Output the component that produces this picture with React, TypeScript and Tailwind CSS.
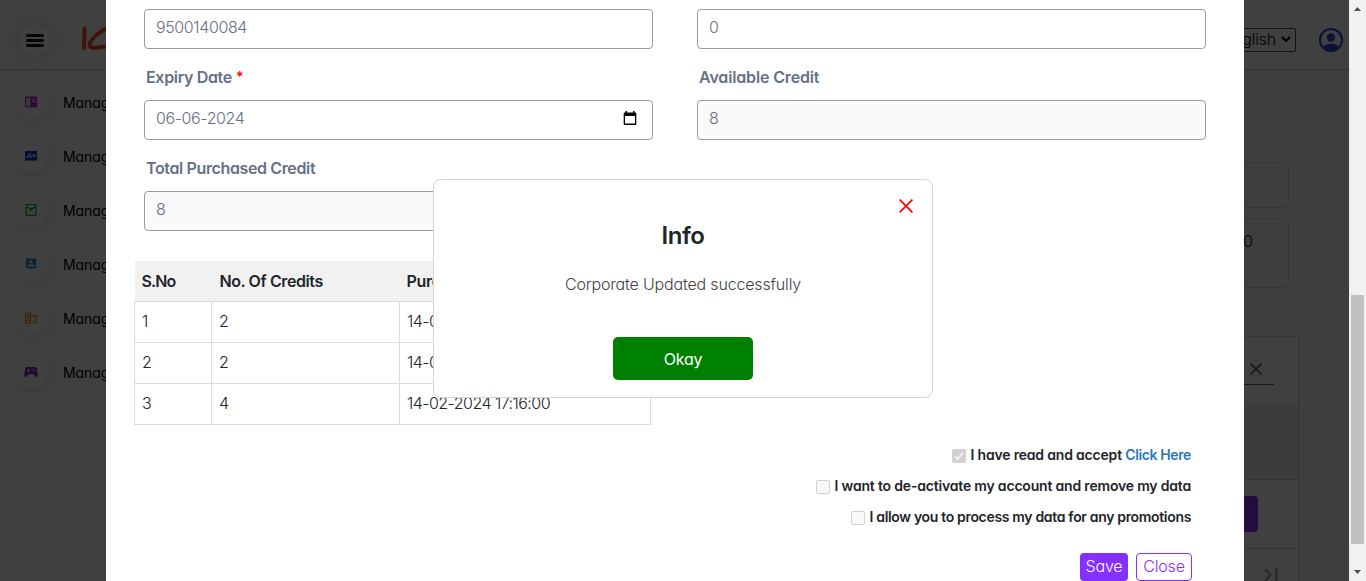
import type { ReactNode } from "react";
import { MdLastPage } from "react-icons/md";

const menuIcons: ReactNode[] = [
  <svg key="book" width="12" height="12" viewBox="0 0 12 12">
    <rect width="12" height="11" y="0.5" rx="1" fill="#b02fd0" />
    <path d="M1.3 1.8h4v8.4h-4z" fill="#fff" fillOpacity="0.85" />
    <path d="M7 3.2h3.6M7 5.4h3.6" stroke="#fff" strokeWidth="1" />
  </svg>,
  <svg key="grade" width="12" height="12" viewBox="0 0 12 12">
    <path d="M0 1h12v10l-1-.8-1 .8-1-.8-1 .8-1-.8-1 .8-1-.8-1 .8-1-.8-1 .8-1-.8-1 .8z" fill="#1d2fd0" />
    <path d="M2 8 4.200 3.300h.6L7 8M3 6.600h3M7.200 5.600h3.800M9.100 3.700v3.800" stroke="#fff" strokeWidth="1" fill="none" />
  </svg>,
  <svg key="box" width="12" height="12" viewBox="0 0 12 12" fill="none" stroke="#0fb83c" strokeWidth="1.3">
    <path d="M1.200.7h9.600v10.600H1.200zM1.200 3.600h2.200L6 5.400l2.600-1.800h2.200" />
    <circle cx="6" cy="5.400" r="0.900" fill="#0fb83c" />
  </svg>,
  <svg key="person" width="12" height="12" viewBox="0 0 12 12">
    <path d="M1.500.5h9a.7.7 0 0 1 .7.7v8.300a.7.7 0 0 1-.7.7H7.400L6 11.600l-1.400-1.400H1.500a.7.7 0 0 1-.7-.7V1.200a.7.7 0 0 1 .7-.7z" fill="#3b8fd0" />
    <circle cx="6" cy="3.800" r="1.500" fill="#fff" />
    <path d="M2.800 8.400c0-2.900 6.400-2.900 6.400 0z" fill="#fff" />
  </svg>,
  <svg key="office" width="12" height="12" viewBox="0 0 12 12" fill="none" stroke="#e2981c" strokeWidth="1.1">
    <path d="M.6 1.200h5v9.800h-5zM5.600 3.600h5.800V11H5.600zM.6 3.600h5M.6 6h5M.6 8.400h5M8.700 5.500v1.200M8.700 8v1.200" />
  </svg>,
  <svg key="game" width="14" height="12" viewBox="0 0 14 12">
    <path d="M3 1h8c1 0 1.600.6 1.800 1.500L13.800 9c.2 1.300-.6 2-1.400 2-.7 0-1-.4-1.500-1L9.500 8.300h-5L3.100 10c-.5.600-.8 1-1.500 1C.8 11 0 10.300.200 9l1-6.500C1.400 1.600 2 1 3 1z" fill="#7a30c9" />
    <path d="M3 4.600h3M4.500 3.100v3" stroke="#fff" strokeWidth="0.9" />
    <circle cx="8.600" cy="4.600" r="0.600" fill="#fff" />
    <circle cx="10.800" cy="4.600" r="0.600" fill="#fff" />
    <circle cx="9.700" cy="3.400" r="0.600" fill="#fff" />
  </svg>,
];

const purchases = [
  ["1", "2", "14-02-2024 17:10:00"],
  ["2", "2", "14-02-2024 17:12:00"],
  ["3", "4", "14-02-2024 17:16:00"],
];

function Field({ label, required, value, disabled, date, tracking = "" }: { label?: string; required?: boolean; value: string; disabled?: boolean; date?: boolean; tracking?: string }) {
  return (
    <div>
      {label && (
        <div className={`flex h-[51px] items-center pt-[5px] pl-[2px] font-semibold text-[#667085] ${tracking}`}>
          <span>{label}</span>
          {required && <span className="ml-1 text-[14px] text-[#ff0000]">*</span>}
        </div>
      )}
      <div className={`flex h-10 items-center justify-between rounded-[4px] border border-[#9a9a9f] pb-[5px] pl-[11px] pr-[15px] font-light tracking-[-0.380px] text-[#667085] ${disabled ? "bg-[#fafafa]" : "bg-white"}`}>
        <span>{value}</span>
        {date && (
          <svg width="14" height="14" viewBox="0 0 14 14" className="mt-[1px]">
            <path d="M1.500 1.500h11a.8.8 0 0 1 .8.8v10.900a.8.8 0 0 1-.8.8h-11a.8.8 0 0 1-.8-.8V2.300a.8.8 0 0 1 .8-.8zM2 5v7.600h10V5z" fill="#000" fillRule="evenodd" />
            <path d="M2.500 0H4v2H2.500zM10 0h1.500v2H10z" fill="#000" />
          </svg>
        )}
      </div>
    </div>
  );
}

function Consent({ checked, tracking, children }: { checked?: boolean; tracking: string; children: ReactNode }) {
  return (
    <label className="flex h-[31px] items-center gap-[5px]">
      <span className={`mt-px flex size-[14px] items-center justify-center rounded-[2px] ${checked ? "bg-[#d1d1d1]" : "border border-[#d1d1d1] bg-[#f9f9f9]"}`}>
        {checked && (
          <svg width="12" height="12" viewBox="0 0 12 12" fill="none" stroke="#f5f5f5" strokeWidth="1.900">
            <path d="m2 6.300 2.600 2.700L10 2.600" />
          </svg>
        )}
      </span>
      <span className={tracking}>{children}</span>
    </label>
  );
}

function Page() {
  return (
    <div className="flex h-full w-full flex-col bg-white">
      <header className="flex h-[70px] shrink-0 items-center border-b border-[#c4c4c4] pb-px pt-3">
        <div className="ml-5 flex size-[30px] items-center justify-center rounded-full bg-white shadow-[0_0_18px_6px_rgba(0,0,0,0.09)]">
          <div className="flex w-[18px] flex-col gap-[2px]">
            <i className="h-[3px] rounded-full bg-[#111]" />
            <i className="h-[3px] rounded-full bg-[#111]" />
            <i className="h-[3px] rounded-full bg-[#111]" />
          </div>
        </div>
        <svg width="50" height="26" viewBox="0 0 50 26" className="-mt-[5px] ml-[31px]" fill="none" stroke="#f4501c" strokeLinecap="round" strokeLinejoin="round">
          <path d="M3.500 3.500 3 23" strokeWidth="4" />
          <path d="M30 1C20 5 10 14 8.500 19c-1 4.500 5 4 9 3.500L30 21" strokeWidth="3.800" />
        </svg>
        <div className="-mt-[1px] ml-auto flex h-6 w-[78px] items-center justify-end rounded-[2px] border border-[#555] pb-px pr-1 font-light text-black">
          <span className="tracking-[-0.200px]">English</span>
          <svg width="10" height="7" viewBox="0 0 10 7" className="ml-[5px]" fill="none" stroke="#000" strokeWidth="2.200">
            <path d="m1 1 4 4 4-4" />
          </svg>
        </div>
        <svg width="24" height="24" viewBox="0 0 24 24" className="ml-[23px] mr-[6px]">
          <circle cx="12" cy="12" r="11" fill="none" stroke="#2840dd" strokeWidth="2" />
          <circle cx="12" cy="9.500" r="4.200" fill="#2840dd" />
          <path d="M4 18.500c3.500-3.800 12.500-3.800 16 0a11 11 0 0 1-16 0z" fill="#2840dd" />
        </svg>
      </header>
      <div className="flex min-h-0 flex-1">
        <nav className="w-[230px] shrink-0 pt-[5px]">
          {menuIcons.map((icon, i) => (
            <div key={i} className="flex h-[54px] items-center pl-[14px]">
              <span className="flex size-[34px] items-center justify-center rounded-full bg-white shadow-[3px_3px_12px_1px_rgba(0,0,0,0.09)]">{icon}</span>
              <span className="ml-[15px] pt-px text-[14px] font-normal tracking-[-0.050px] text-black">Manage</span>
            </div>
          ))}
        </nav>
        <main className="flex flex-1 flex-col bg-[#f4f8f5] pl-10 pr-[50px] pt-[92px]">
          <div className="mr-[10px] h-[46px] shrink-0 rounded-[6px] border border-[#d0d4d2]" />
          <div className="mr-[10px] mt-[10px] h-[70px] shrink-0 rounded-[6px] border border-[#d0d4d2] pr-[35px] pt-[10px] text-right font-light text-black">10</div>
          <section className="mt-12 flex flex-1 flex-col border border-b-0 border-[#d4d4d4] bg-white shadow-md">
            <div className="flex h-[66px] shrink-0 justify-end pr-6">
              <div className="flex h-[48px] w-[200px] items-center justify-end border-b border-[#666] pr-3 pt-[17px]">
                <svg width="12" height="12" viewBox="0 0 12 12" stroke="#666" strokeWidth="1.600">
                  <path d="m.6.600 10.800 10.800M11.400.600.600 11.400" />
                </svg>
              </div>
            </div>
            <div className="h-[77px] shrink-0 border-b border-[#d0d0d0] bg-[#f0f0f0]" />
            <div className="flex h-[69px] shrink-0 items-center justify-end border-b border-[#d0d0d0] pr-10">
              <div className="h-9 w-20 rounded-[4px] bg-[#8630ff]" />
            </div>
            <div className="flex justify-end overflow-hidden pr-[14px] pt-[13px]">
              <MdLastPage size={26} className="text-[#999]" />
            </div>
          </section>
        </main>
      </div>
    </div>
  );
}

function CorporateForm() {
  return (
    <div className="h-full w-[1138px] bg-white pl-7 pr-[38px] pt-[9px]">
      <div className="grid grid-cols-2 gap-x-[44px] pl-[10px]">
        <Field value="9500140084" />
        <Field value="0" />
        <Field label="Expiry Date" required value="06-06-2024" date tracking="tracking-[-0.330px]" />
        <Field label="Available Credit" value="8" disabled tracking="tracking-[-0.150px]" />
        <Field label="Total Purchased Credit" value="8" disabled tracking="tracking-[-0.370px]" />
      </div>
      <table className="mt-[30px] w-[517px] table-fixed border-collapse text-left text-[#212529]">
        <colgroup>
          <col className="w-[77px]" />
          <col className="w-[188px]" />
          <col />
        </colgroup>
        <thead>
          <tr className="h-10 bg-[#f1f1f1] font-semibold">
            <th className="pl-[7px] font-semibold tracking-[-0.850px]">S.No</th>
            <th className="pl-2 font-semibold tracking-[-0.400px]">No. Of Credits</th>
            <th className="pl-[7px] font-semibold tracking-[-0.300px]">Purchased Date</th>
          </tr>
        </thead>
        <tbody>
          {purchases.map((row) => (
            <tr key={row[0]} className="h-[41px]">
              {row.map((cell, i) => (
                <td key={i} className="border border-[#dcdcdc] pb-px pl-[7px] font-light tracking-[-0.540px]">{cell}</td>
              ))}
            </tr>
          ))}
        </tbody>
      </table>
      <div className="mr-[14px] mt-[15px] flex flex-col items-end text-[14px] font-semibold text-[#212529]">
        <Consent checked tracking="pr-px tracking-[-0.190px]">
          I have read and accept <a className="tracking-[-0.380px] text-[#2878bd]">Click Here</a>
        </Consent>
        <Consent tracking="pr-px tracking-[-0.190px]">I want to de-activate my account and remove my data</Consent>
        <Consent tracking="pr-px tracking-[-0.330px]">I allow you to process my data for any promotions</Consent>
      </div>
      <div className="mr-[14px] mt-5 flex justify-end gap-2 font-light">
        <button className="h-7 w-12 rounded-[4px] bg-[#8630ff] pb-px tracking-[-0.150px] text-white">Save</button>
        <button className="h-7 w-14 rounded-[4px] border border-[#8630ff] bg-white pb-px tracking-[-0.150px] text-[#8630ff]">Close</button>
      </div>
    </div>
  );
}

function InfoDialog() {
  return (
    <div className="relative flex h-[219px] w-[500px] flex-col items-center rounded-[8px] border border-[#d4d4d4] bg-white text-[#212529]">
      <button className="absolute right-[19px] top-[19px]" aria-label="Close">
        <svg width="14" height="14" viewBox="0 0 14 14" stroke="#ff0000" strokeWidth="1.700">
          <path d="m.6.600 12.800 12.800M13.400.600.600 13.400" />
        </svg>
      </button>
      <h2 className="mt-[41px] text-[24px] font-semibold leading-[30px] tracking-[-0.400px]">Info</h2>
      <p className="mt-[21px] font-light leading-6 tracking-[-0.170px] text-[#3f4246]">Corporate Updated successfully</p>
      <button className="mt-[41px] h-[43px] w-[140px] rounded-[5px] bg-[#008000] font-normal tracking-[-0.200px] text-white">Okay</button>
    </div>
  );
}

function Scrollbar() {
  return (
    <div className="flex h-full w-[17px] shrink-0 flex-col items-center bg-[#f1f1f1]">
      <svg width="7" height="4" viewBox="0 0 7 4" className="mt-[7px]" fill="#505050">
        <path d="M3.500 0 7 4H0z" />
      </svg>
      <div className="mt-[284px] h-[249px] w-[13px] bg-[#c1c1c1]" />
      <svg width="7" height="4" viewBox="0 0 7 4" className="mt-[26px]" fill="#505050">
        <path d="M0 0h7L3.500 4z" />
      </svg>
    </div>
  );
}

export default function App() {
  return (
    <div className="flex h-[581px] w-[1366px] overflow-hidden font-['Inter',sans-serif] text-[16px] leading-6 [font-feature-settings:'cv11']">
      <div className="relative h-full w-[1349px] overflow-hidden">
        <Page />
        <div className="absolute inset-0 flex bg-black/75 pl-[106px]">
          <CorporateForm />
        </div>
        <div className="absolute left-[433px] top-[179px]">
          <InfoDialog />
        </div>
      </div>
      <Scrollbar />
    </div>
  );
}
